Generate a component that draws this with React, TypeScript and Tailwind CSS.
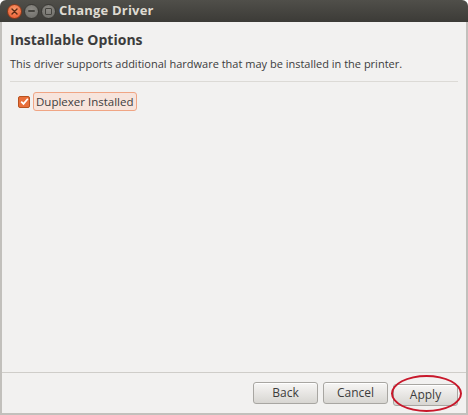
import React from "react";

const font = { fontFamily: '"Open Sans", "DejaVu Sans", sans-serif' };

function TitleButtons() {
  return (
    <div className="flex items-center gap-[2px] pl-[7px]">
      <span className="flex h-[15px] w-[15px] items-center justify-center rounded-full border border-[#8a3a1a] bg-[radial-gradient(circle_at_50%_35%,#f79a6c,#e9542a)]">
        <svg width="7" height="7" viewBox="0 0 7 7">
          <path d="M1 1L6 6M6 1L1 6" stroke="#5a2a14" strokeWidth="1.4" strokeLinecap="round" />
        </svg>
      </span>
      <span className="flex h-[15px] w-[15px] items-center justify-center rounded-full border border-[#3a3935] bg-[radial-gradient(circle_at_50%_35%,#8d8b86,#6b6a65)]">
        <span className="h-[2px] w-[7px] rounded-sm bg-[#45443f]" />
      </span>
      <span className="flex h-[15px] w-[15px] items-center justify-center rounded-full border border-[#3a3935] bg-[radial-gradient(circle_at_50%_35%,#8d8b86,#6b6a65)]">
        <span className="h-[7px] w-[7px] rounded-[1px] border-[1.5px] border-[#45443f]" />
      </span>
    </div>
  );
}

function DialogButton({ label }: { label: string }) {
  return (
    <button
      type="button"
      className="h-[22px] w-[65px] rounded-[3px] border border-[#a8a6a2] bg-gradient-to-b from-[#f7f6f5] to-[#d8d6d2] text-[12px] text-[#3c3c3c] shadow-[inset_0_1px_0_#ffffff]"
    >
      {label}
    </button>
  );
}

export default function App() {
  return (
    <div className="h-[415px] w-[468px] bg-white" style={font}>
      <div className="flex h-full flex-col overflow-hidden rounded-t-[6px]">
        {/* title bar */}
        <div className="flex h-[22px] shrink-0 items-center bg-gradient-to-b from-[#504f4a] to-[#3c3b37]">
          <TitleButtons />
          <span className="ml-[3px] text-[13px] font-bold tracking-[0.2px] text-[#dfdbd2]">Change Driver</span>
        </div>

        {/* body */}
        <div className="flex flex-1 flex-col border-x-2 border-b-2 border-[#c2c0bc] bg-[#f2f1f0]">
          <div className="flex-1 px-[8px] pt-[8px]">
            <h1 className="text-[14px] font-bold leading-[20px] text-[#3c3c3c]">Installable Options</h1>
            <p className="mt-[7px] text-[11px] leading-[14px] text-[#3c3c3c]">
              This driver supports additional hardware that may be installed in the printer.
            </p>
            <div className="mt-[10px] h-px bg-[#dcdad6]" />
            <label className="ml-[8px] mt-[10px] flex items-center gap-[3px]">
              <span className="flex h-[12px] w-[12px] items-center justify-center rounded-[2px] border border-[#b8521f] bg-[#e96f3a]">
                <svg width="9" height="9" viewBox="0 0 9 9">
                  <path d="M1.2 4.6L3.5 6.9L7.8 1.8" fill="none" stroke="#fff" strokeWidth="1.7" />
                </svg>
              </span>
              <span className="rounded-[3px] border border-[#f0a584] bg-[#f7e4dc] px-[2px] text-[11.5px] leading-[17px] text-[#3c3c3c]">
                Duplexer Installed
              </span>
            </label>
          </div>

          <div className="h-px bg-[#cfcdc9]" />
          <div className="flex h-[40px] items-center justify-end gap-[5px] pr-[8px]">
            <DialogButton label="Back" />
            <DialogButton label="Cancel" />
            <div className="relative">
              <DialogButton label="Apply" />
              <span className="pointer-events-none absolute -inset-y-[6px] -left-[2px] -right-[4px] rounded-[50%] border-2 border-[#c8182b]" />
            </div>
          </div>
        </div>
      </div>
    </div>
  );
}
